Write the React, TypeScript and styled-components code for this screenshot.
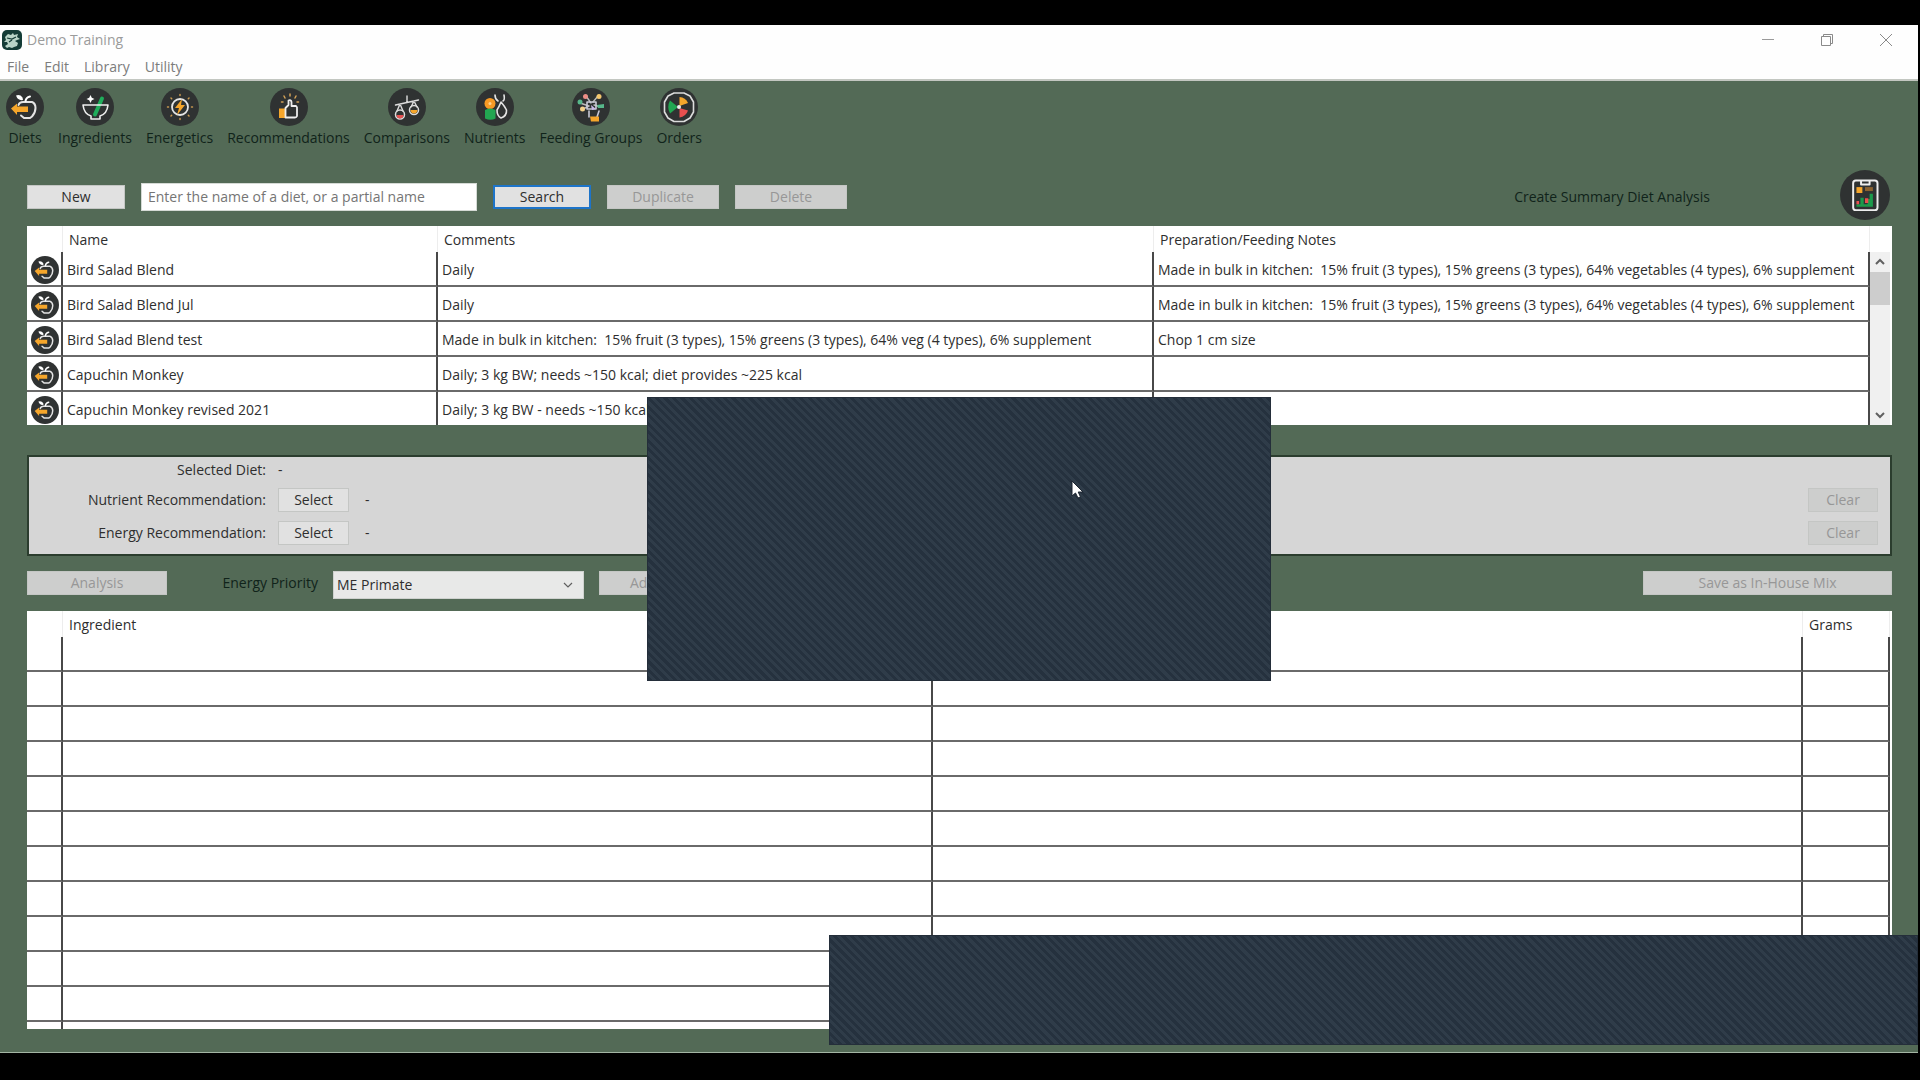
import React from "react";
import styled, { createGlobalStyle, css } from "styled-components";

const GlobalStyle = createGlobalStyle`
  * { box-sizing: border-box; }
  body {
    margin: 0;
    background: #000;
    font-family: "Open Sans", "Noto Sans", sans-serif;
    font-size: 14px;
    line-height: 20px;
    color: #2e2e2e;
  }
  button, input, select { font: inherit; color: inherit; margin: 0; }
`;

const Page = styled.div`
  position: relative;
  height: 100vh;
  min-height: 900px;
  padding: 25px 2px 27px 0;
  background: #000;
  overflow: hidden;
`;

const Window = styled.div`
  height: 100%;
  display: flex;
  flex-direction: column;
  background: #536a56;
  border-bottom: 1px solid #a3b5a4;
`;

const Header = styled.header`
  height: 56px;
  flex: none;
  background: #fefefe;
  border-bottom: 2px solid #c3c7c1;
`;

const TitleBar = styled.div`
  display: flex;
  align-items: center;
  height: 29px;
  padding: 0 19px 0 2px;
  gap: 5px;
  color: #9b9b9b;
`;

const Title = styled.span`
  flex: 1;
`;

const WindowButtons = styled.div`
  display: flex;
  gap: 32px;
`;

const WindowButton = styled.button`
  width: 27px;
  height: 20px;
  padding: 0;
  border: 0;
  background: none;
  display: grid;
  place-items: center;
`;

const MenuBar = styled.nav`
  display: flex;
  gap: 15px;
  height: 25px;
  padding: 3px 7px;
`;

const MenuItem = styled.a`
  color: #7c7c7c;
  text-decoration: none;
`;

const Toolbar = styled.nav`
  display: flex;
  gap: 14px;
  padding: 7px 6px 0;
`;

const Tool = styled.a`
  display: flex;
  flex-direction: column;
  align-items: center;
  gap: 2px;
  color: #10231a;
  text-decoration: none;
`;

const Content = styled.main`
  flex: 1;
  min-height: 0;
  display: flex;
  flex-direction: column;
  padding: 24px 26px 23px 27px;
`;

const ActionRow = styled.div`
  display: flex;
  align-items: center;
  gap: 16px;
  height: 50px;
`;

const Button = styled.button<{ $width: number; $focused?: boolean }>`
  width: ${(p) => p.$width}px;
  height: 24px;
  flex: none;
  padding: 0;
  line-height: 20px;
  background: #e1e1e1;
  border: 1px solid #c4c6c4;
  ${(p) =>
    p.$focused &&
    css`
      border: 2px solid #1d74c9;
    `}
  &:disabled {
    background: #cdcecd;
    border-color: #c4c6c4;
    color: #979797;
  }
`;

const SearchInput = styled.input`
  width: 336px;
  height: 28px;
  padding: 0 6px 2px;
  border: 1px solid #d5dad5;
  background: #fff;
  &::placeholder { color: #757575; opacity: 1; }
`;

const Spacer = styled.div`
  flex: 1;
`;

const SummaryLabel = styled.label`
  color: #10231a;
  margin-right: 114px;
`;

const RoundButton = styled.button`
  padding: 0;
  border: 0;
  background: none;
  display: block;
  margin-right: 2px;
`;

const Sheet = styled.section<{ $grow?: boolean }>`
  display: flex;
  background: #fff;
  overflow: hidden;
  ${(p) =>
    p.$grow
      ? css`
          flex: 1;
          min-height: 0;
          padding: 0 2px 2px 0;
        `
      : css`
          flex: none;
          margin-top: 4px;
          height: 199px;
        `}
`;

const Grid = styled.table`
  flex: 1;
  width: 100%;
  height: max-content;
  table-layout: fixed;
  border-collapse: separate;
  border-spacing: 0;
`;

const HeadCell = styled.th<{ $width?: number }>`
  ${(p) => p.$width && `width: ${p.$width}px;`}
  height: 26px;
  padding: 2px 6px 0;
  font-weight: 400;
  text-align: left;
  border-right: 1px solid #ededed;
`;

const Cell = styled.td`
  height: 35px;
  padding: 2px 0 0 4px;
  white-space: pre;
  overflow: hidden;
  border-right: 2px solid #484848;
  border-bottom: 2px solid #6a6a6a;
  tr:last-child > & { border-bottom-color: #fff; }
  svg { display: block; }
`;

const ScrollTrack = styled.div`
  width: 20px;
  margin: 26px 2px 0 0;
  display: flex;
  flex-direction: column;
  background: #f0f0f0;
`;

const ScrollButton = styled.button`
  height: 20px;
  padding: 0;
  border: 0;
  background: none;
  display: grid;
  place-items: center;
`;

const ScrollThumb = styled.div`
  height: 33px;
  background: #cdcdcd;
`;

const SelectionPanel = styled.section`
  flex: none;
  height: 101px;
  margin-top: 30px;
  padding: 4px 12px 9px 9px;
  background: #d6d6d6;
  border: 2px solid #2b3d2e;
  display: flex;
  flex-direction: column;
  gap: 9px;
`;

const PanelRow = styled.div`
  display: flex;
  align-items: center;
  gap: 12px;
  height: 24px;
  &:first-child { height: 18px; }
`;

const PanelLabel = styled.span`
  width: 228px;
  text-align: right;
`;

const PanelValue = styled.span<{ $indent?: boolean }>`
  flex: 1;
  padding-left: ${(p) => (p.$indent ? 4 : 0)}px;
`;

const PriorityRow = styled.div`
  flex: none;
  display: flex;
  align-items: flex-start;
  gap: 15px;
  height: 40px;
  margin-top: 15px;
`;

const PriorityLabel = styled.label`
  width: 136px;
  line-height: 24px;
  text-align: right;
  color: #10231a;
`;

const SelectBox = styled.div`
  display: grid;
  grid-template-columns: 1fr 20px;
  align-items: center;
  width: 251px;
  height: 28px;
  background: #e8e9e8;
  border: 1px solid #cfd2cf;
  svg { grid-area: 1 / 2; pointer-events: none; }
`;

const Select = styled.select`
  grid-area: 1 / 1 / 2 / 3;
  height: 26px;
  padding: 0 3px;
  appearance: none;
  border: 0;
  background: none;
`;

const Shade = styled.div`
  position: absolute;
  background: repeating-linear-gradient(45deg, #25313e 0 3px, #2f3c49 3px 6px);
  border: 1px solid #242e3a;
`;

const CenterShade = styled(Shade)`
  left: 647px;
  top: 397px;
  width: 624px;
  height: 284px;
`;

const BottomShade = styled(Shade)`
  left: 829px;
  right: 2px;
  top: 935px;
  height: 110px;
`;

const Pointer = styled.svg`
  position: absolute;
  left: 1071px;
  top: 480px;
`;

const Disc = ({ size, children }: { size: number; children: React.ReactNode }) => (
  <svg width={size} height={size} viewBox="0 0 38 38" fill="none" strokeLinecap="round" strokeLinejoin="round" aria-hidden="true">
    <circle cx="19" cy="19" r="19" fill="#2f3232" />
    {children}
  </svg>
);

const DietIcon = ({ size = 38 }: { size?: number }) => (
  <Disc size={size}>
    <path d="M12.500 17q1-3 4.500-3h9q3.500 1.500 3.500 6t-3.500 8.500l-2 1.500h-6l-3-2.500" stroke="#e4e4e4" strokeWidth="2" />
    <path d="M19.500 13q.5-3.500 4.500-4.500" stroke="#fff" strokeWidth="2" />
    <path d="M10 7.500q4-1.500 6.500 2l.5 2.500q-5 1-7-4.500z" fill="#fff" />
    <path d="M5 20.500l6-5v3h11v5.500H11v3z" fill="#f6a62b" />
  </Disc>
);

const IngredientIcon = () => (
  <Disc size={38}>
    <path d="M26 10.500l-7 16" stroke="#1fae5b" strokeWidth="4" />
    <path d="M7 17h25q-1 9-8 11v3h-9v-3q-7-2-8-11z" stroke="#eee" strokeWidth="1.600" />
    <path d="M14.500 7l1.300 2.700L18.500 11l-2.700 1.300-1.300 2.700-1.300-2.700L10.500 11l2.700-1.300z" fill="#fff" />
  </Disc>
);

const EnergyIcon = () => (
  <Disc size={38}>
    <circle cx="19" cy="19" r="8" stroke="#e6e6e6" strokeWidth="1.800" />
    <path d="M21 11l-7 9h4l-2 7 8-10h-4z" fill="#f6a62b" />
    <path d="M19 6.500v1M19 30.500v1M6.500 19h1M30.500 19h1M10 10l.7.700M28 10l-.7.700M10 28l.7-.7M28 28l-.7-.7" stroke="#c9984f" strokeWidth="1.500" />
  </Disc>
);

const ThumbIcon = () => (
  <Disc size={38}>
    <path d="M9 20.500h6V30H9z" fill="#f6a62b" />
    <path d="M15.500 20l3-3v-4.500q2.500-1 3 1.500v4h4.500q1.500 1 1 3v7q-.5 1.500-2 1.500h-9.500z" stroke="#eee" strokeWidth="1.800" />
    <path d="M20 6v2M14 8l1 2M26 8l-1 2M11.500 14h1.500M27 14h1.500" stroke="#d2a157" strokeWidth="1.500" />
  </Disc>
);

const ScaleIcon = () => (
  <Disc size={38}>
    <path d="M7.500 17l23-5M19 8v6.500M12 16l-3 7M12 16l3 7M26 13l-3 6M26 13l3 6" stroke="#ddd" strokeWidth="1.400" />
    <circle cx="12" cy="26.500" r="4.500" stroke="#ddd" strokeWidth="1.500" />
    <circle cx="26" cy="22" r="4.500" stroke="#ddd" strokeWidth="1.500" />
    <path d="M8.500 27h7q-.5 3.500-3.500 3.500T8.500 27z" fill="#e65252" />
    <path d="M22.500 22h7q-.5 3.500-3.500 3.500T22.500 22z" fill="#f6a62b" />
  </Disc>
);

const NutrientIcon = () => (
  <Disc size={38}>
    <circle cx="14" cy="15.500" r="5.500" fill="#f79a24" />
    <circle cx="14" cy="15.500" r="1.500" fill="#ffd08a" />
    <path d="M9 22q5-3 10.500 0v8.500q-5 2.500-10.500 0z" fill="#22a651" />
    <path d="M19 7q0 4 3 6M28 7q1 5-1 6M25 14q-2 5-4 8 0 6 4 8 6-2 5.500-8-2-4-5.500-8z" stroke="#e4e4e4" strokeWidth="1.600" />
  </Disc>
);

const GroupIcon = () => (
  <Disc size={38}>
    <path d="M14 8l5 7M26 8l-5 6M8 15l9 3M11 21l6-3M29 19l-7-2" stroke="#bbb" strokeWidth="1.400" />
    <path d="M15 14h9v7h-9zM17 23v6M27 23l-2 6" stroke="#c9c9d5" strokeWidth="1.600" />
    <circle cx="13.500" cy="8.500" r="2.500" fill="#ec8d86" />
    <circle cx="27" cy="8.500" r="2.500" fill="#f3c66d" />
    <circle cx="8" cy="14" r="2.500" fill="#57b68a" />
    <circle cx="10.500" cy="21" r="2.500" fill="#f3d08a" />
    <path d="M25 17l7-1v4h-6z" fill="#57b68a" />
    <path d="M19 17l5 4-4 1z" fill="#cbb8e8" />
    <path d="M18 28.500h9v5h-8z" fill="#f6a62b" />
  </Disc>
);

const OrderIcon = () => (
  <Disc size={38}>
    <path d="M14 5h10l6 3 3.500 6v10L30 30l-6 3.500H14L8 30l-3.500-6V14L8 8z" stroke="#dcdcdc" strokeWidth="1.600" />
    <path d="M18 19l-8-6.500q-3.500 6.500 0 13z" fill="#22a651" />
    <path d="M19.500 18V9q6 .5 8.500 6z" fill="#f6a62b" />
    <path d="M19.500 20l8.500 2.500q-2 6-8.500 7z" fill="#e94f4f" />
    <circle cx="19" cy="19" r="2" fill="#eee" />
  </Disc>
);

const ReportIcon = () => (
  <Disc size={50}>
    <rect x="10" y="8" width="18.500" height="22.500" rx="2" stroke="#eee" strokeWidth="1.500" />
    <path d="M16 8.500v2.500h6.500V8.500" stroke="#eee" strokeWidth="1.500" />
    <path d="M12.500 13H17v4.500h-4.500z" fill="#f6a62b" />
    <path d="M19 13h6v3h-6z" fill="#8b6230" />
    <path d="M12.500 28v-2h3v-5h2.500v5h3v-4h1.500v-4h2.500v10z" fill="#1c9a4b" />
    <path d="M12.500 23.500h2V26h-2zM19 21.500h2.500V25H19z" fill="#e94f4f" />
  </Disc>
);

const Chevron = ({ up, thin }: { up?: boolean; thin?: boolean }) => (
  <svg width="10" height="10" viewBox="0 0 10 10" fill="none" stroke="#606060" strokeWidth={thin ? 1.2 : 2} aria-hidden="true">
    <path d={up ? "M1 7l4-4 4 4" : "M1 3l4 4 4-4"} />
  </svg>
);

const LogoIcon = () => (
  <svg width="20" height="20" viewBox="0 0 20 20" aria-hidden="true">
    <rect width="20" height="20" rx="5" fill="#143c37" />
    <path d="M3 7l3-3 3 1 2-2 1 2 4-1-1 3 3 2-3 1-2 1 3 2-1 3-3 1-2 1-3-1-2 1-2-2 3-2-1-2-3 0 2-2z" fill="#b9d4c8" />
    <path d="M5 8l5 1 4-2M7 12l3-2" stroke="#143c37" strokeWidth="1.200" fill="none" />
  </svg>
);

const tools = [
  { name: "Diets", icon: <DietIcon /> },
  { name: "Ingredients", icon: <IngredientIcon /> },
  { name: "Energetics", icon: <EnergyIcon /> },
  { name: "Recommendations", icon: <ThumbIcon /> },
  { name: "Comparisons", icon: <ScaleIcon /> },
  { name: "Nutrients", icon: <NutrientIcon /> },
  { name: "Feeding Groups", icon: <GroupIcon /> },
  { name: "Orders", icon: <OrderIcon /> },
];

const bulkNotes = "Made in bulk in kitchen:  15% fruit (3 types), 15% greens (3 types), 64% vegetables (4 types), 6% supplement";

const diets = [
  { name: "Bird Salad Blend", comments: "Daily", notes: bulkNotes },
  { name: "Bird Salad Blend Jul", comments: "Daily", notes: bulkNotes },
  {
    name: "Bird Salad Blend test",
    comments: "Made in bulk in kitchen:  15% fruit (3 types), 15% greens (3 types), 64% veg (4 types), 6% supplement",
    notes: "Chop 1 cm size",
  },
  { name: "Capuchin Monkey", comments: "Daily; 3 kg BW; needs ~150 kcal; diet provides ~225 kcal", notes: "" },
  { name: "Capuchin Monkey revised 2021", comments: "Daily; 3 kg BW - needs ~150 kcal", notes: "" },
];

const emptyRows = Array.from({ length: 12 }, (_, i) => i);

export default function App() {
  return (
    <Page>
      <GlobalStyle />
      <Window>
        <Header>
          <TitleBar>
            <LogoIcon />
            <Title>Demo Training</Title>
            <WindowButtons>
              <WindowButton aria-label="Minimize">
                <svg width="14" height="14" stroke="#9a9a9a" fill="none"><path d="M1 6.500h12" /></svg>
              </WindowButton>
              <WindowButton aria-label="Restore">
                <svg width="14" height="14" stroke="#8a8a8a" fill="none"><path d="M1.500 3.500h9v9h-9zM3.500 3.500v-2h9v9h-2" /></svg>
              </WindowButton>
              <WindowButton aria-label="Close">
                <svg width="14" height="14" stroke="#8a8a8a" fill="none"><path d="M1 1l12 12M13 1L1 13" /></svg>
              </WindowButton>
            </WindowButtons>
          </TitleBar>
          <MenuBar>
            {["File", "Edit", "Library", "Utility"].map((m) => (
              <MenuItem href="#" key={m}>{m}</MenuItem>
            ))}
          </MenuBar>
        </Header>

        <Toolbar>
          {tools.map((t) => (
            <Tool href="#" key={t.name}>
              {t.icon}
              {t.name}
            </Tool>
          ))}
        </Toolbar>

        <Content>
          <ActionRow>
            <Button $width={98}>New</Button>
            <SearchInput aria-label="Diet name" placeholder="Enter the name of a diet, or a partial name" />
            <Button $width={98} $focused>Search</Button>
            <Button $width={112} disabled>Duplicate</Button>
            <Button $width={112} disabled>Delete</Button>
            <Spacer />
            <SummaryLabel htmlFor="summary">Create Summary Diet Analysis</SummaryLabel>
            <RoundButton id="summary"><ReportIcon /></RoundButton>
          </ActionRow>

          <Sheet>
            <Grid>
              <thead>
                <tr>
                  <HeadCell $width={36} />
                  <HeadCell $width={375}>Name</HeadCell>
                  <HeadCell>Comments</HeadCell>
                  <HeadCell>Preparation/Feeding Notes</HeadCell>
                </tr>
              </thead>
              <tbody>
                {diets.map((d) => (
                  <tr key={d.name}>
                    <Cell><DietIcon size={28} /></Cell>
                    <Cell>{d.name}</Cell>
                    <Cell>{d.comments}</Cell>
                    <Cell>{d.notes}</Cell>
                  </tr>
                ))}
              </tbody>
            </Grid>
            <ScrollTrack>
              <ScrollButton aria-label="Scroll up"><Chevron up /></ScrollButton>
              <ScrollThumb />
              <Spacer />
              <ScrollButton aria-label="Scroll down"><Chevron /></ScrollButton>
            </ScrollTrack>
          </Sheet>

          <SelectionPanel>
            <PanelRow>
              <PanelLabel>Selected Diet:</PanelLabel>
              <PanelValue>-</PanelValue>
            </PanelRow>
            {["Nutrient", "Energy"].map((kind) => (
              <PanelRow key={kind}>
                <PanelLabel>{kind} Recommendation:</PanelLabel>
                <Button $width={71}>Select</Button>
                <PanelValue $indent>-</PanelValue>
                <Button $width={70} disabled>Clear</Button>
              </PanelRow>
            ))}
          </SelectionPanel>

          <PriorityRow>
            <Button $width={140} disabled>Analysis</Button>
            <PriorityLabel htmlFor="priority">Energy Priority</PriorityLabel>
            <SelectBox>
              <Select id="priority" defaultValue="ME Primate">
                <option>ME Primate</option>
              </Select>
              <Chevron thin />
            </SelectBox>
            <Button $width={88} disabled>Add</Button>
            <Spacer />
            <Button $width={249} disabled>Save as In-House Mix</Button>
          </PriorityRow>

          <Sheet $grow>
            <Grid>
              <thead>
                <tr>
                  <HeadCell $width={36} />
                  <HeadCell>Ingredient</HeadCell>
                  <HeadCell />
                  <HeadCell $width={87}>Grams</HeadCell>
                </tr>
              </thead>
              <tbody>
                {emptyRows.map((r) => (
                  <tr key={r}>
                    <Cell />
                    <Cell />
                    <Cell />
                    <Cell />
                  </tr>
                ))}
              </tbody>
            </Grid>
          </Sheet>
        </Content>
      </Window>

      <CenterShade />
      <BottomShade />
      <Pointer width="14" height="20" viewBox="0 0 14 20" aria-hidden="true">
        <path d="M1 1v15l3.500-3 2.500 5 2.500-1.200L7.200 12H12z" fill="#fff" stroke="#1c2530" />
      </Pointer>
    </Page>
  );
}
